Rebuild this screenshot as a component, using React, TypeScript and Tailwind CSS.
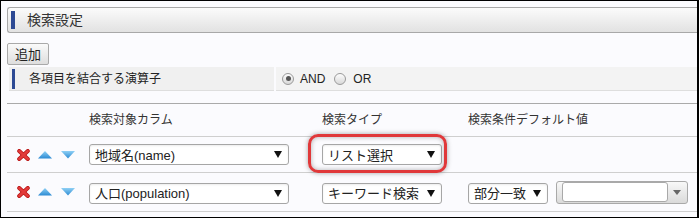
import React from "react";

const font = "font-['Liberation_Sans','Noto_Sans_CJK_JP',sans-serif]";

function Arrow() {
  return (
    <svg width="8" height="7" viewBox="0 0 8 7" className="shrink-0">
      <polygon points="0,0 8,0 4,7" fill="#111" />
    </svg>
  );
}

function Sel({ text, w }: { text: string; w: string }) {
  return (
    <div
      className={`flex h-[21px] items-center justify-between rounded-[3px] border border-[#a6a6a6] bg-white pl-[5px] pr-[6px] text-[13px] leading-none text-[#222] shadow-[inset_0_1px_2px_rgba(0,0,0,0.08)] ${w}`}
    >
      <span className="pt-[1px]">{text}</span>
      <Arrow />
    </div>
  );
}

function Icons() {
  return (
    <div className="flex w-[82px] items-center pl-[10px]">
      <svg width="13" height="12" viewBox="0 0 13 12">
        <line x1="2.2" y1="2" x2="10.8" y2="10" stroke="#b81414" strokeWidth="4" strokeLinecap="round" />
        <line x1="10.8" y1="2" x2="2.2" y2="10" stroke="#b81414" strokeWidth="4" strokeLinecap="round" />
        <line x1="2.2" y1="2" x2="10.8" y2="10" stroke="#e23a3a" strokeWidth="2.4" strokeLinecap="round" />
        <line x1="10.8" y1="2" x2="2.2" y2="10" stroke="#e23a3a" strokeWidth="2.4" strokeLinecap="round" />
      </svg>
      <svg width="14" height="8" viewBox="0 0 14 8" className="ml-[8px]">
        <defs>
          <linearGradient id="gu" x1="0" y1="0" x2="0" y2="1">
            <stop offset="0" stopColor="#8fd0f5" />
            <stop offset="1" stopColor="#2b8ad3" />
          </linearGradient>
        </defs>
        <polygon points="7,0 14,7.5 0,7.5" fill="url(#gu)" />
      </svg>
      <svg width="14" height="8" viewBox="0 0 14 8" className="ml-[9px]">
        <defs>
          <linearGradient id="gd" x1="0" y1="0" x2="0" y2="1">
            <stop offset="0" stopColor="#8fd0f5" />
            <stop offset="1" stopColor="#2b8ad3" />
          </linearGradient>
        </defs>
        <polygon points="0,0 14,0 7,7.5" fill="url(#gd)" />
      </svg>
    </div>
  );
}

function Radio({ checked }: { checked?: boolean }) {
  return (
    <div className="flex h-[12px] w-[12px] items-center justify-center rounded-full border border-[#9a9a9a] bg-gradient-to-b from-[#fdfdfd] to-[#d8d8d8]">
      {checked && <div className="h-[5px] w-[5px] rounded-full bg-[#555]" />}
    </div>
  );
}

export default function App() {
  return (
    <div
      className={`h-[218px] w-[699px] overflow-hidden border-y border-l border-r-2 border-black bg-[#fbfbfe] pl-[6px] pt-[6px] text-[#333] ${font}`}
    >
      {/* header */}
      <div className="flex h-[26px] items-center rounded-l-[3px] border-y border-l border-[#a8a8a8] bg-gradient-to-b from-[#fbfbfb] to-[#e2e2e2]">
        <div className="ml-[3px] h-[18px] w-[4px] bg-[#2d4a94]" />
        <span className="ml-[12px] text-[14px] leading-none text-[#333]">検索設定</span>
      </div>

      {/* add button */}
      <div className="mt-[10px] flex h-[22px] w-[42px] items-center justify-center rounded-[2px] border border-[#a9a9a9] bg-gradient-to-b from-[#fafafa] to-[#dedede] text-[13px] leading-none text-[#222]">
        追加
      </div>

      {/* operator row */}
      <div className="ml-[2px] mt-[2px] flex h-[24px]">
        <div className="flex w-[265px] items-center border-b border-[#dedede] bg-[#f0f0f0]">
          <div className="ml-[3px] h-[20px] w-[3px] bg-[#2d4a94]" />
          <span className="ml-[14px] text-[12px] leading-none text-[#222]">各項目を結合する演算子</span>
        </div>
        <div className="ml-[2px] flex flex-1 items-center border-b border-[#dedede] bg-[#f3f3f3] pl-[6px] text-[12px] leading-none text-[#222]">
          <Radio checked />
          <span className="ml-[6px]">AND</span>
          <div className="ml-[9px]">
            <Radio />
          </div>
          <span className="ml-[7px]">OR</span>
        </div>
      </div>

      {/* table */}
      <div className="mt-[12px] border-t border-[#aaaaaa]">
        <div className="flex h-[33px] items-center border-b border-[#cfcfcf] text-[12px] leading-none text-[#333]">
          <div className="w-[82px]" />
          <div className="w-[233px]">検索対象カラム</div>
          <div className="w-[146px]">検索タイプ</div>
          <div>検索条件デフォルト値</div>
        </div>

        <div className="relative flex h-[36px] items-center border-b border-[#cfcfcf]">
          <Icons />
          <div className="w-[233px]">
            <Sel text="地域名(name)" w="w-[200px]" />
          </div>
          <div className="relative w-[146px]">
            <Sel text="リスト選択" w="w-[120px]" />
          </div>
          <div className="absolute left-[301px] top-[-3px] h-[39px] w-[139px] rounded-[10px] border-[3px] border-[#e0383a] shadow-[0_0_5px_rgba(0,0,0,0.35),inset_0_0_5px_rgba(0,0,0,0.3)]" />
        </div>

        <div className="flex h-[39px] items-center border-b border-[#cfcfcf]">
          <Icons />
          <div className="w-[233px] pt-[2px]">
            <Sel text="人口(population)" w="w-[200px]" />
          </div>
          <div className="w-[146px] pt-[2px]">
            <Sel text="キーワード検索" w="w-[120px]" />
          </div>
          <div className="w-[88px] pt-[2px]">
            <Sel text="部分一致" w="w-[80px]" />
          </div>
          <div className="flex h-[23px] w-[132px] items-center rounded-[3px] border border-[#a9a9a9] bg-gradient-to-b from-[#f8f8f8] to-[#dadada] pl-[5px]">
            <div className="h-[20px] w-[106px] rounded-[3px] border border-[#a9a9a9] bg-white" />
            <svg width="8" height="5" viewBox="0 0 8 5" className="ml-[5px]">
              <polygon points="0,0 8,0 4,5" fill="#666" />
            </svg>
          </div>
        </div>
      </div>
    </div>
  );
}
